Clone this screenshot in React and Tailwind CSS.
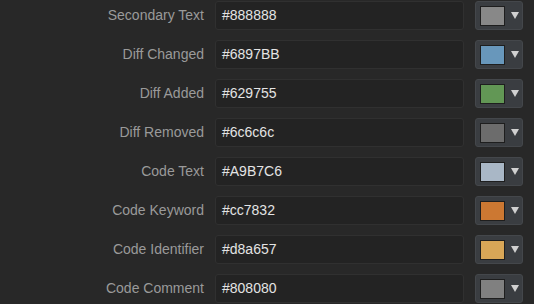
const rows = [
  { label: "Secondary Text", value: "#888888" },
  { label: "Diff Changed", value: "#6897BB" },
  { label: "Diff Added", value: "#629755" },
  { label: "Diff Removed", value: "#6c6c6c" },
  { label: "Code Text", value: "#A9B7C6" },
  { label: "Code Keyword", value: "#cc7832" },
  { label: "Code Identifier", value: "#d8a657" },
  { label: "Code Comment", value: "#808080" },
];

function ColorRow({ label, value }) {
  return (
    <div className="flex items-center h-[29px]">
      <div className="w-[215px] pr-[11px] text-right text-[14px] text-[#9a9a9a] whitespace-nowrap">
        {label}
      </div>
      <div className="w-[249px] h-[29px] flex items-center px-[6px] bg-[#232323] border border-[#303030] rounded-[3px] text-[14px] text-[#e4e4e4]">
        {value}
      </div>
      <button className="ml-[11px] w-[48px] h-[29px] flex items-center pl-[4px] gap-[6px] bg-[#3a3d41] border border-[#44474b] rounded-[3px]">
        <span
          className="block w-[25px] h-[20px] border border-[#1e1e1e]"
          style={{ backgroundColor: value }}
        />
        <svg width="8" height="7" viewBox="0 0 8 7">
          <path d="M0 0 H8 L4 7 Z" fill="#d0d0d0" />
        </svg>
      </button>
    </div>
  );
}

export default function App() {
  return (
    <div className="w-[534px] h-[304px] overflow-hidden bg-[#282828] pt-[1px] flex flex-col gap-[10px] font-['Liberation_Sans',Arial,sans-serif]">
      {rows.map((r) => (
        <ColorRow key={r.label} {...r} />
      ))}
    </div>
  );
}
